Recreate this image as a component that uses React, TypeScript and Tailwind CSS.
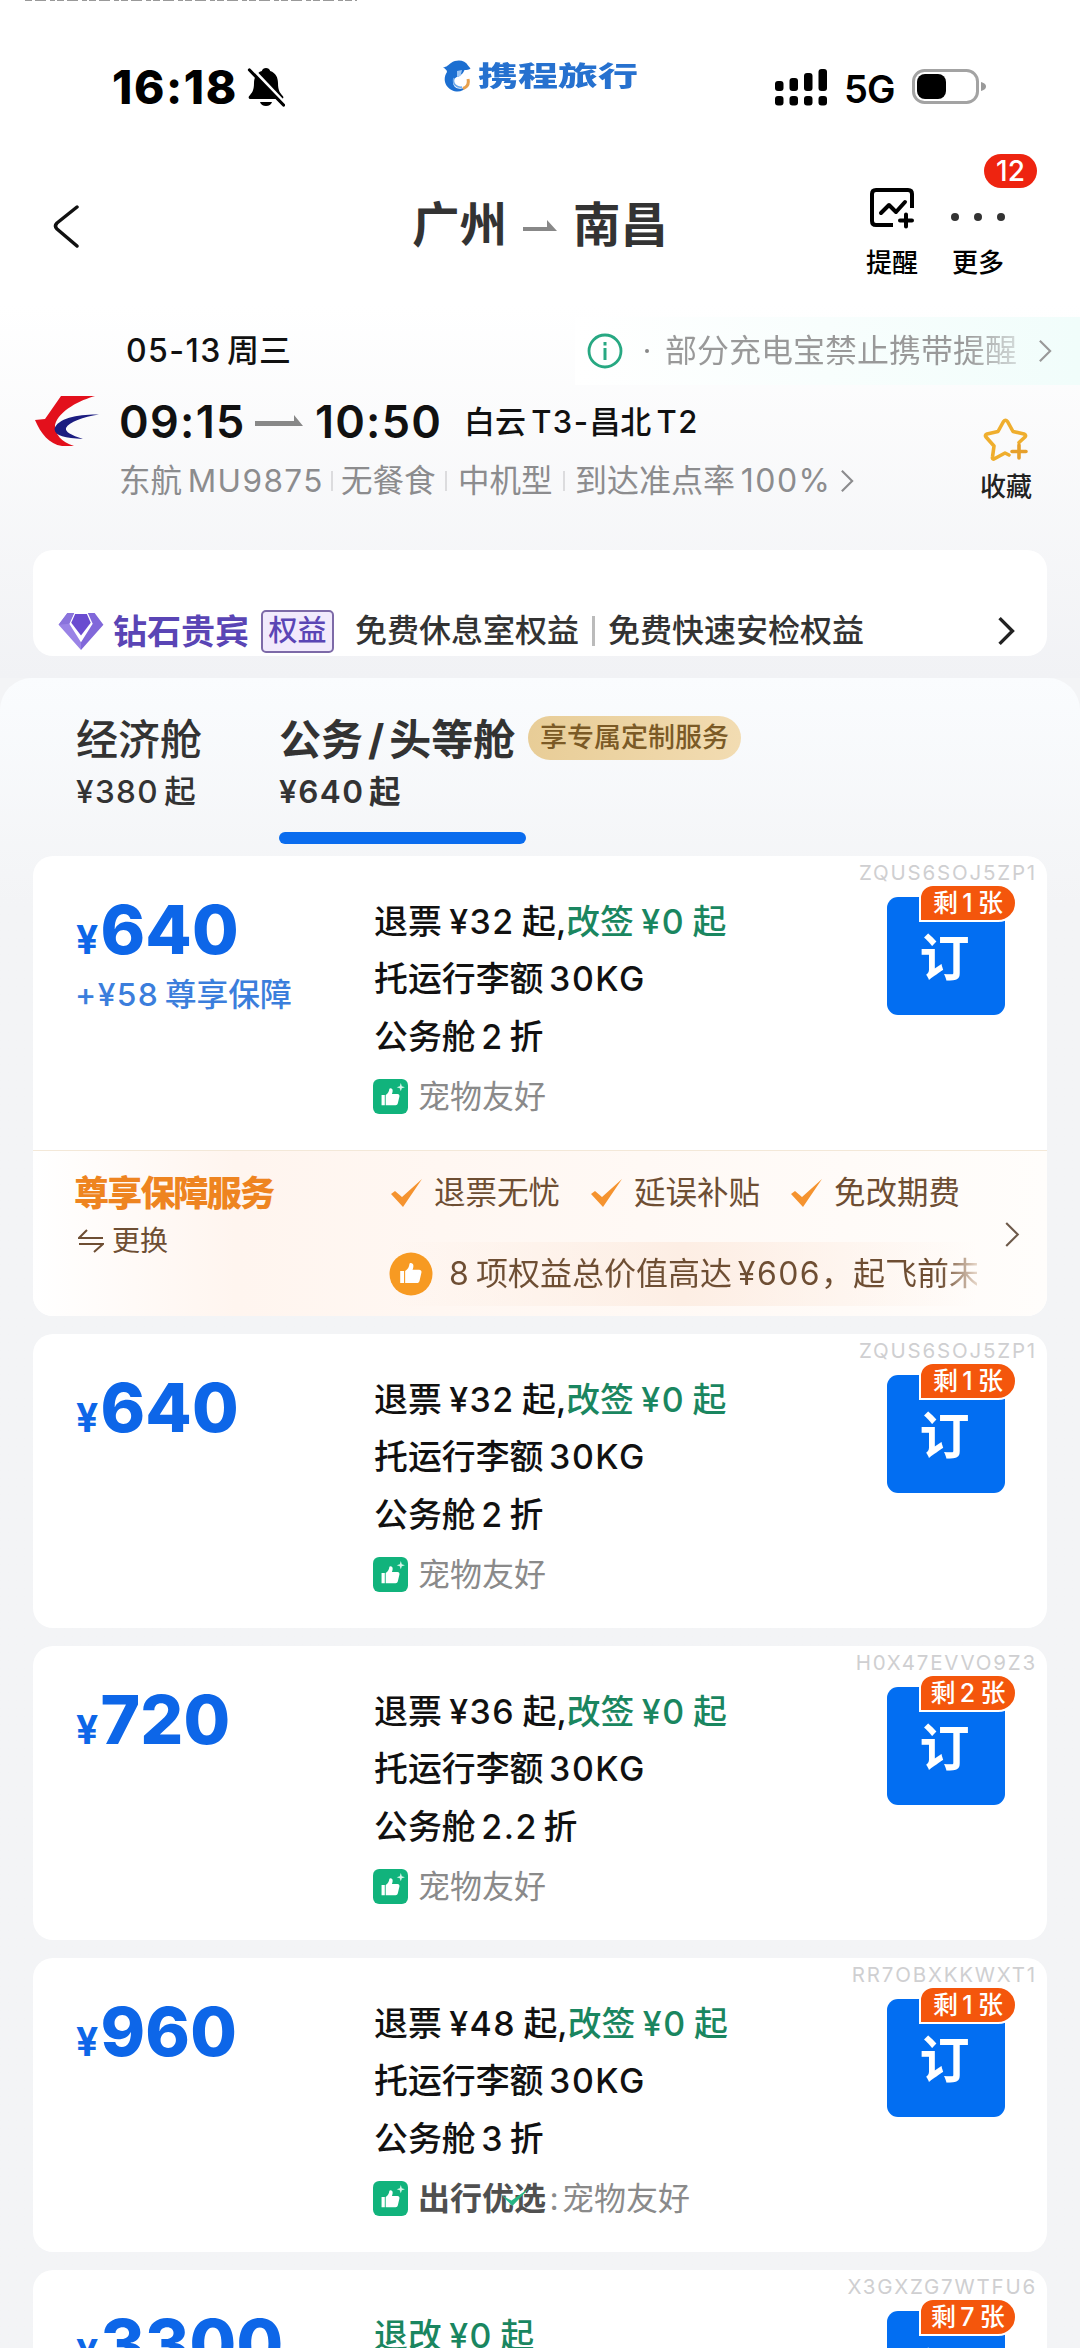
import React from 'react';

type Fare = {
  code: string;
  price: string;
  refund?: string;
  change: string;
  cabin: string;
  left: number;
  extra?: string;
  preferred?: boolean;
};

const fares: Fare[] = [
  { code: 'ZQUS6SOJ5ZP1', price: '640', refund: '退票 ¥32 起,', change: '改签 ¥0 起', cabin: '公务舱 2 折', left: 1, extra: '+¥58 尊享保障' },
  { code: 'ZQUS6SOJ5ZP1', price: '640', refund: '退票 ¥32 起,', change: '改签 ¥0 起', cabin: '公务舱 2 折', left: 1 },
  { code: 'H0X47EVVO9Z3', price: '720', refund: '退票 ¥36 起,', change: '改签 ¥0 起', cabin: '公务舱 2.2 折', left: 2 },
  { code: 'RR7OBXKKWXT1', price: '960', refund: '退票 ¥48 起,', change: '改签 ¥0 起', cabin: '公务舱 3 折', left: 1, preferred: true },
  { code: 'X3GXZG7WTFU6', price: '3300', change: '退改 ¥0 起', cabin: '公务舱 10 折', left: 7 },
];

// Latin runs get a little tracking, the gaps next to Chinese text get tightened
const Mixed: React.FC<{ children: string }> = ({ children }) => (
  <span className="[word-spacing:-0.1em]">
    {children.split(/([\x21-\x2b\x2d-\x7e¥]+)/).map((part, i) =>
      i % 2 ? (
        <span key={i} className="tracking-[0.045em]">
          {part}
        </span>
      ) : (
        part
      )
    )}
  </span>
);

const Chevron: React.FC<{ className: string; width?: number }> = ({ className, width = 2.5 }) => (
  <svg viewBox="0 0 16 28" fill="none" stroke="currentColor" strokeWidth={width} className={className}>
    <path d="M2 2l12 12L2 26" />
  </svg>
);

const ThumbPath = () => (
  <path d="M7 14.5h3.5v11H7zM11.5 14.5c2.6-1.6 3.6-3.8 3.9-6.4.2-1.5 3.6-1.3 3.6 1.6 0 1.6-.4 2.7-.8 3.8h6c1.6 0 2.4 1.2 2.1 2.5l-1.7 7.4c-.3 1.3-1.2 2.1-2.5 2.1H11.5z" fill="#fff" />
);

const StatusBar = () => (
  <div className="flex h-[174px] items-center">
    <div className="flex w-[443px] items-center pl-[112px]">
      <span className="w-[124px] text-[46px] leading-none font-extrabold tracking-[1.6px] text-black">16:18</span>
      <svg viewBox="0 0 38 40" className="ml-[11px] h-[40px] w-[38px]">
        <path d="M19 1c2 0 3.700 1.200 4.200 3 5.600 2 7.800 6.600 7.800 12 0 8 2.300 10 4.800 13 1.200 1.600.4 3-1.200 3H3.400c-1.600 0-2.400-1.400-1.200-3C4.700 26 7 24 7 16c0-5.400 2.200-10 7.800-12 .5-1.800 2.200-3 4.200-3zM13 35h12c-.8 2.800-3 4-6 4s-5.200-1.200-6-4z" fill="#000" />
        <path d="M4 1l34 36" stroke="#fff" strokeWidth="4" />
        <path d="M2.500 3l34 35" stroke="#000" strokeWidth="3.200" strokeLinecap="round" />
      </svg>
    </div>
    <div className="flex w-[332px] items-center gap-[7px] pb-[23px]">
      <svg viewBox="0 0 28 32" className="h-[32px] w-[28px]">
        <path d="M0 7.500C4 7 5 5 8 3c6-4 14-3 17 2.500l2.500 3c-1 1.500-4 1.500-6 1.500-1.500 4-4 5-6 6.500-5 1-7 6-4 10 3 3 8 3 12 0-3 5-9 6.500-15 3.500C1 26 0 18 4 12c0-2-2-3.500-4-4.500z" fill="#1c6fd1" />
        <path d="M14 11l5-1-1.500 6-3.500 1z" fill="#9cc6f5" />
        <path d="M20 28.500c4.500-1.500 6-5 5-9.500" stroke="#e7a04c" strokeWidth="3" fill="none" />
        <path d="M11 18c-2 6 3 10 8 9" stroke="#6ba8ea" strokeWidth="1.600" fill="none" />
      </svg>
      <span className="origin-center scale-y-[0.68] text-[40px] leading-none font-black text-[#2671cf]">携程旅行</span>
    </div>
    <svg viewBox="0 0 52 37" className="h-[37px] w-[52px]">
      <rect x="0" y="12" width="8.500" height="10" rx="3" />
      <rect x="14.500" y="9" width="8.500" height="13" rx="3" />
      <rect x="29" y="4" width="8.500" height="18" rx="3" />
      <rect x="43.500" y="0" width="8.500" height="22" rx="3" />
      <rect x="0" y="27" width="8.500" height="9.500" rx="3" />
      <rect x="14.500" y="27" width="8.500" height="9.500" rx="3" />
      <rect x="29" y="27" width="8.500" height="9.500" rx="3" />
      <rect x="43.500" y="27" width="8.500" height="9.500" rx="3" />
    </svg>
    <span className="ml-[17px] w-[50px] pt-1 text-[38px] leading-none font-semibold tracking-[-1px] text-black">5G</span>
    <svg viewBox="0 0 76 36" className="ml-[18px] h-[36px] w-[76px]">
      <rect x="1.500" y="1.500" width="64" height="32" rx="11" fill="none" stroke="#a3a3a3" strokeWidth="3" />
      <rect x="5" y="5" width="29" height="25" rx="8" />
      <path d="M69 13c4 1 5 3 5 4.500s-1 3.500-5 4.500z" fill="#9a9a9a" />
    </svg>
  </div>
);

const Header = () => (
  <header className="flex h-[104px] items-center text-[#333]">
    <svg viewBox="0 0 28 44" fill="none" stroke="#111" strokeWidth="3.500" strokeLinecap="round" strokeLinejoin="round" className="ml-[52px] h-[44px] w-[28px]">
      <path d="M25 3L5 19q-3 3 0 6l20 17" />
    </svg>
    <h1 className="ml-[332px] flex items-center pb-[3px] text-[47.5px] leading-none font-bold">
      广州
      <svg viewBox="0 0 34 12" className="mx-[16px] mt-[3px] h-[12px] w-[34px]">
        <path d="M0 7h24V0l10 11H0z" fill="#888" />
      </svg>
      南昌
    </h1>
    <div className="ml-auto flex self-start pt-[13px] pr-[74px] text-[26px] leading-[30px] font-medium text-black">
      <div className="flex w-[56px] flex-col items-center">
        <svg viewBox="0 0 46 42" fill="none" stroke="#000" strokeWidth="4" strokeLinecap="round" strokeLinejoin="round" className="h-[42px] w-[46px]">
          <path d="M24 38H7q-4 0-4-4V7q0-4 4-4h32q4 0 4 4v14" strokeLinecap="butt" />
          <path d="M12 26l8-8 7 7 9-10" />
          <path d="M31 33.500h12M37 27.500v12" />
        </svg>
        <span className="mt-[19px]">提醒</span>
      </div>
      <div className="relative ml-[30px] flex w-[56px] flex-col items-center">
        <div className="flex h-[42px] items-center justify-center gap-[15px] pt-[17px]">
          <i className="size-2 rounded-full bg-[#333]" />
          <i className="size-2 rounded-full bg-[#333]" />
          <i className="size-2 rounded-full bg-[#333]" />
        </div>
        <span className="mt-[19px]">更多</span>
        <span className="absolute -top-[33px] left-[34px] flex h-[34px] w-[53px] items-center justify-center rounded-full bg-[#ee2410] text-[28px] leading-none text-white">12</span>
      </div>
    </div>
  </header>
);

const Divider = () => <i className="h-[20px] w-[2px] bg-[#dcdcde]" />;

const FlightInfo = () => (
  <section className="pt-[39px]">
    <div className="flex h-[68px] items-center">
      <span className="w-[575px] pl-[126px] text-[32px] font-medium text-[#111]">
        <Mixed>05-13 周三</Mixed>
      </span>
      <div className="flex h-full flex-1 items-center bg-gradient-to-r from-white to-[#f1fdfb] pl-[12px] text-[32px] text-[#999]">
        <svg viewBox="0 0 36 36" fill="none" stroke="#27a882" strokeWidth="2.800" className="size-[36px]">
          <circle cx="18" cy="18" r="16" />
          <path d="M18 15v12M18 9v3.500" strokeWidth="3" />
        </svg>
        <span className="ml-[22px] size-1 rounded-full bg-[#888]" />
        <span className="ml-[16px] w-[353px] bg-gradient-to-r from-[#999] from-85% to-[#d5dcdb] bg-clip-text whitespace-nowrap text-transparent">部分充电宝禁止携带提醒</span>
        <Chevron className="ml-[20px] h-[24px] w-[14px]" />
      </div>
    </div>
    <div className="flex">
      <svg viewBox="0 0 64 51" className="mt-[11px] ml-[35px] h-[51px] w-[64px]">
        <path d="M26 0H60C46 4 24 14 20 29C20 38 26 46 39 50H27C14 48 6 38 0 24L10 23Z" fill="#e3101c" />
        <path d="M64 18.500C45 18 22 22 19.500 33C20 40 30 42 48 43C36 39 30 36 31 32C34 26 48 21 64 18.500Z" fill="#1b1c80" />
      </svg>
      <div className="ml-[20px] flex w-[860px] flex-col">
        <div className="flex h-[74px] items-center text-[#111]">
          <span className="w-[136px] text-[45px] font-semibold tracking-[1.3px]">09:15</span>
          <svg viewBox="0 0 48 14" className="h-[14px] w-[48px]">
            <path d="M0 6h39V0l9 11H0z" fill="#888" />
          </svg>
          <span className="ml-[12px] w-[127px] text-[45px] font-semibold tracking-[1.2px]">10:50</span>
          <span className="ml-[22px] text-[31px] font-medium whitespace-nowrap">
            <Mixed>白云 T3-昌北 T2</Mixed>
          </span>
        </div>
        <div className="flex h-[44px] items-center text-[31.5px] whitespace-nowrap text-[#8c8c8e]">
          <span className="w-[212px]">
            <Mixed>东航 MU9875</Mixed>
          </span>
          <Divider />
          <span className="ml-[8px] w-[104px]">无餐食</span>
          <Divider />
          <span className="ml-[11px] w-[105px]">中机型</span>
          <Divider />
          <span className="ml-[10px] text-[32px]">
            <Mixed>到达准点率 100%</Mixed>
          </span>
          <Chevron className="ml-[9px] h-[24px] w-[14px]" />
        </div>
      </div>
      <div className="flex flex-col items-center pt-[32px] pl-px">
        <svg viewBox="0 0 46 44" fill="none" stroke="#efae2e" strokeWidth="3.600" strokeLinejoin="round" strokeLinecap="round" className="h-[45px] w-[46px]">
          <path d="M26 37.500l-4-2-11 6q-2 .5-1.500-2l1.500-11-8-9q-1.500-2 1-3l11-2.500 5.500-10q2-2.500 4 0l5.500 10 11 2.500q2.500 1 1 3L36 25" />
          <path d="M29 34h14M36 27.500v13" stroke="#e6a02c" />
        </svg>
        <span className="mt-[7px] text-[26px] leading-[36px] font-medium whitespace-nowrap text-[#222]">收藏</span>
      </div>
    </div>
  </section>
);

const VipCard = () => (
  <section className="mx-[33px] mt-[45px] flex h-[106px] items-end rounded-[20px] bg-white pb-[4px]">
    <div className="flex h-[42px] w-full items-center whitespace-nowrap">
      <svg viewBox="0 0 48 40" className="ml-[24px] h-[39px] w-[48px]">
        <path d="M10 1h7l-5 11 12 19v8L1 13z" fill="#9a83e6" />
        <path d="M38 1h-7l5 11-12 19v8l23-26z" fill="#8168da" />
        <path d="M18 2h12l4 9-10 13-10-13z" fill="#6a4bd0" />
        <path d="M10 1h7l-5 11-11 1z" fill="#8a73dc" />
      </svg>
      <span className="ml-[8px] text-[34px] font-bold text-[#5a45b5]">钻石贵宾</span>
      <span className="ml-[12px] flex h-[43px] w-[73px] items-center justify-center rounded-[5px] border-2 border-[#7d6aa8] bg-[#f1eafc] text-[29px] font-medium text-[#5a45b5]">权益</span>
      <span className="ml-[21px] text-[32px] font-medium text-[#333]">免费休息室权益</span>
      <i className="ml-[13px] h-[30px] w-[3px] bg-[#bbb]" />
      <span className="ml-[13px] text-[32px] font-medium text-[#333]">免费快速安检权益</span>
      <Chevron className="mr-[32px] ml-auto h-[30px] w-[18px] text-[#222]" width={3.2} />
    </div>
  </section>
);

const CabinTabs = () => (
  <div className="flex pt-10 pb-3 pl-[76px] text-[#333]">
    <div className="w-[203px]">
      <div className="text-[42px] leading-[44px] font-medium">经济舱</div>
      <div className="mt-3 text-[31.5px] leading-[36px] font-medium">
        <Mixed>¥380 起</Mixed>
      </div>
    </div>
    <div className="w-[247px]">
      <div className="text-[42px] leading-[44px] font-bold whitespace-nowrap">公务<span className="mx-[5px]">/</span>头等舱</div>
      <div className="mt-3 text-[31.5px] leading-[36px] font-semibold">
        <Mixed>¥640 起</Mixed>
      </div>
      <div className="mt-[22px] h-3 rounded-full bg-[#0a6cee]" />
    </div>
    <span className="-mt-[2px] ml-[2px] flex h-[44px] w-[213px] items-center justify-center rounded-full bg-gradient-to-r from-[#e8cd97] to-[#f2dcb2] text-[27px] font-medium text-[#7b5a26]">享专属定制服务</span>
  </div>
);

const Tick = () => (
  <svg viewBox="0 0 32 28" className="h-[28px] w-[32px]">
    <path d="M0 15l4-3 7 6L31 0 12 28z" fill="#f5932f" />
  </svg>
);

const Protection = () => (
  <div className="flex h-[166px] rounded-b-[20px] border-t border-[#f3e8d8] bg-gradient-to-r from-white via-[#fff5ef] via-20% to-[#fffdfb] pl-[42px]">
    <div className="w-[314px] pt-[22px]">
      <div className="-ml-px text-[35px] leading-[40px] font-black tracking-[-1.8px] text-[#ee8420]">尊享保障服务</div>
      <div className="mt-[9px] flex items-center text-[28px] leading-[38px] text-[#6e4e33]">
        <svg viewBox="0 0 26 24" fill="none" stroke="currentColor" strokeWidth="2" className="mr-[8px] ml-[3px] h-[24px] w-[26px]">
          <path d="M9 1L1 9h24M1 15h24l-9 8" />
        </svg>
        更换
      </div>
    </div>
    <div className="w-[588px] pt-[22px] text-[31.5px] leading-[40px] text-[#6e4e33]">
      <div className="flex items-center whitespace-nowrap">
        {['退票无忧', '延误补贴', '免改期费'].map((t) => (
          <span key={t} className="flex w-[200px] shrink-0 items-center gap-[11px] pl-[2px]">
            <Tick />
            {t}
          </span>
        ))}
      </div>
      <div className="mt-[29px] flex items-center bg-gradient-to-r from-transparent via-[#fdeee4] to-transparent py-[10px] whitespace-nowrap">
        <svg viewBox="0 0 44 44" className="size-[44px] shrink-0">
          <circle cx="22" cy="22" r="21.500" fill="#f79a22" />
          <g transform="translate(3.500 3) scale(1.100)">
            <ThumbPath />
          </g>
        </svg>
        <span className="ml-[16px] w-[528px] overflow-hidden bg-gradient-to-r from-[#6e4e33] from-93% to-[#e8d8ca] bg-clip-text text-[32px] text-transparent">
          <Mixed>8 项权益总价值高达 ¥606，起飞前未</Mixed>
        </span>
      </div>
    </div>
    <Chevron className="mt-[70px] ml-[27px] h-[27px] w-[16px] text-[#6e5a4a]" width={2.2} />
  </div>
);

const FareCard: React.FC<{ fare: Fare }> = ({ fare }) => (
  <article className="relative mb-[18px] rounded-[20px] bg-white">
    <span className="absolute top-[4px] right-[10px] text-[20.5px] leading-[26px] tracking-[1.8px] text-[#cfcfd1]">{fare.code}</span>
    <div className="flex h-[294px] pl-[43px]">
      <div className="w-[298px] pt-[40px]">
        <div className="h-[67px] text-[67.5px] leading-[67px] font-extrabold tracking-[0.2px] text-[#0d66e8]">
          <span className="mr-[2px] text-[39px] font-bold">¥</span>
          {fare.price}
        </div>
        {fare.extra && (
          <div className="mt-[13px] -ml-px text-[31.8px] leading-[38px] font-medium text-[#3b7edc]">
            <Mixed>{fare.extra}</Mixed>
          </div>
        )}
      </div>
      <div className="w-[513px] pt-[37px] text-[33.9px] leading-[57.3px] font-medium whitespace-nowrap text-[#111]">
        <p className="[&_span]:[word-spacing:-0.05em]">
          {fare.refund && <Mixed>{fare.refund}</Mixed>}
          <span className="text-[#1a8660]">
            <Mixed>{fare.change}</Mixed>
          </span>
        </p>
        <p>
          <Mixed>托运行李额 30KG</Mixed>
        </p>
        <p>
          <Mixed>{fare.cabin}</Mixed>
        </p>
        <div className="flex h-[63px] items-center text-[32px] font-normal text-[#8a8a8a]">
          <svg viewBox="0 0 34 34" className="mr-[10px] -ml-px size-[35px]">
            <rect width="34" height="34" rx="6" fill="#11b37c" />
            <g transform="translate(2 2.500) scale(.9)">
              <ThumbPath />
            </g>
            <path d="M27 4l1 3 3 1-3 1-1 3-1-3-3-1 3-1z" fill="#d5f5e8" />
          </svg>
          {fare.preferred && (
            <span className="relative font-bold text-[#505050]">
              出行优选
              <svg viewBox="0 0 32 20" className="absolute top-[18px] left-[82px] h-[18px] w-[32px]">
                <path d="M0 8l11 6L31 0 12 20z" fill="#27b585" />
              </svg>
            </span>
          )}
          {fare.preferred && <span className="w-[16px] text-center">:</span>}
          宠物友好
        </div>
      </div>
      <button className="relative mt-[41px] flex size-[118px] items-center justify-center rounded-[11px] bg-[#026ef2] pt-[3px] pr-[3px] text-[50px] leading-none font-bold text-white">
        订
        <span className="absolute -top-[13px] left-[32px] flex h-[38px] w-[98px] items-center justify-center rounded-[19px] rounded-tl-[14px] rounded-bl-none border-2 border-white bg-[#f4560c] text-[25px] leading-none font-medium whitespace-nowrap">
          <Mixed>{`剩 ${fare.left} 张`}</Mixed>
        </span>
      </button>
    </div>
    {fare.extra && <Protection />}
  </article>
);

export default function App() {
  return (
    <div className="h-[2348px] w-[1080px] overflow-hidden bg-[#f3f4f6] font-['Inter','Noto_Sans_CJK_SC',sans-serif]">
      <div className="h-[678px] bg-gradient-to-b from-white from-45% to-[#f1f2f5]">
        <svg viewBox="0 0 332 2" className="absolute top-0 left-[25px] h-[2px] w-[332px]">
          <path d="M0 0.500h332" stroke="#999" strokeWidth="1" strokeDasharray="7 3 11 4 5 2" />
        </svg>
        <StatusBar />
        <Header />
        <FlightInfo />
        <VipCard />
      </div>
      <main className="rounded-t-[32px] bg-gradient-to-b from-[#fafcfe] to-[#f3f4f6] to-12%">
        <CabinTabs />
        <div className="px-[33px]">
          {fares.map((fare, i) => (
            <FareCard key={i} fare={fare} />
          ))}
        </div>
      </main>
    </div>
  );
}
